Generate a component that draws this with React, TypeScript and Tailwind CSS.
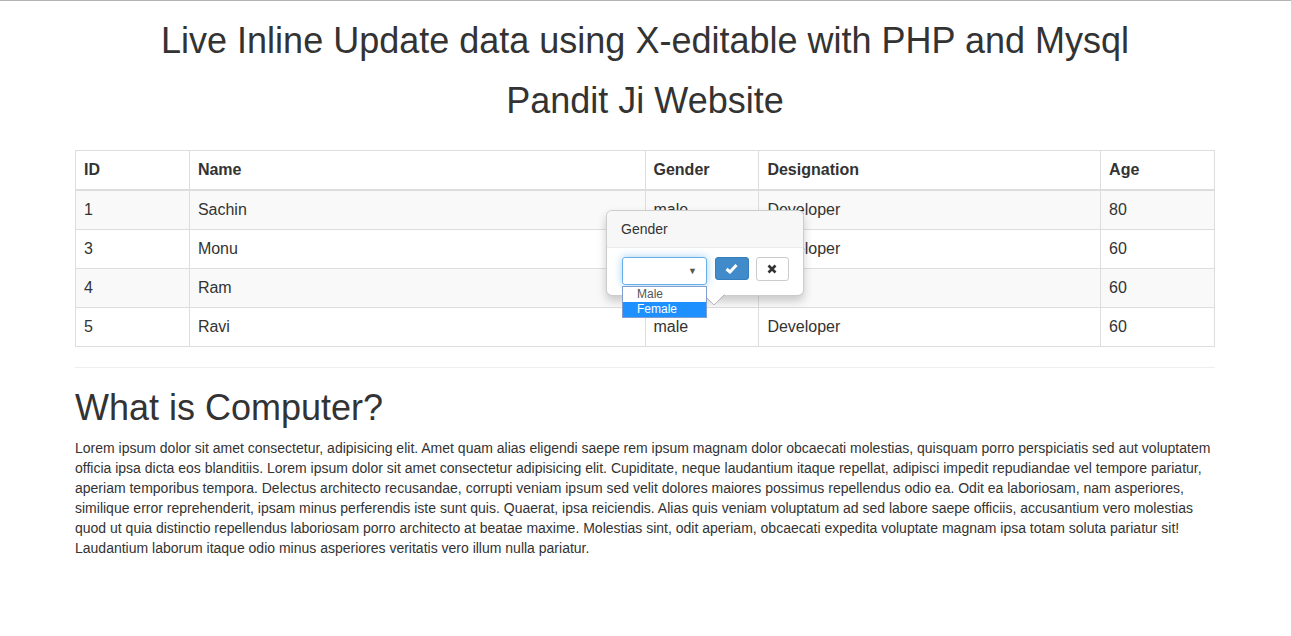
import React from "react";

const rows = [
  { id: "1", name: "Sachin", gender: "male", designation: "Developer", age: "80" },
  { id: "3", name: "Monu", gender: "male", designation: "Developer", age: "60" },
  { id: "4", name: "Ram", gender: "", designation: "", age: "60" },
  { id: "5", name: "Ravi", gender: "male", designation: "Developer", age: "60" },
];

const text =
  "Lorem ipsum dolor sit amet consectetur, adipisicing elit. Amet quam alias eligendi saepe rem ipsum magnam dolor obcaecati molestias, quisquam porro perspiciatis sed aut voluptatem officia ipsa dicta eos blanditiis. Lorem ipsum dolor sit amet consectetur adipisicing elit. Cupiditate, neque laudantium itaque repellat, adipisci impedit repudiandae vel tempore pariatur, aperiam temporibus tempora. Delectus architecto recusandae, corrupti veniam ipsum sed velit dolores maiores possimus repellendus odio ea. Odit ea laboriosam, nam asperiores, similique error reprehenderit, ipsam minus perferendis iste sunt quis. Quaerat, ipsa reiciendis. Alias quis veniam voluptatum ad sed labore saepe officiis, accusantium vero molestias quod ut quia distinctio repellendus laboriosam porro architecto at beatae maxime. Molestias sint, odit aperiam, obcaecati expedita voluptate magnam ipsa totam soluta pariatur sit! Laudantium laborum itaque odio minus asperiores veritatis vero illum nulla pariatur.";

function GenderPopover() {
  return (
    <div className="absolute left-[531px] top-[60px] z-10 w-[198px] rounded-[6px] border border-black/20 bg-white shadow-[0_5px_10px_rgba(0,0,0,0.2)]">
      <div className="rounded-t-[5px] border-b border-[#ebebeb] bg-[#f7f7f7] px-[14px] py-2 text-[14px] leading-[20px]">
        Gender
      </div>
      <div className="flex items-start px-[14px] pb-[10px] pt-[9px]">
        <div className="relative ml-px">
          <div className="flex h-[28px] w-[85px] items-center justify-end rounded-[3px] border border-[#66afe9] pr-[9px] shadow-[0_0_8px_rgba(102,175,233,0.6)]">
            <span className="text-[9px] leading-none text-[#555]">▼</span>
          </div>
          <div className="absolute left-0 top-[29px] z-20 w-[85px] border border-[#7f9dd0] bg-white text-[12px] leading-[15px]">
            <div className="pl-[14px] text-[#555]">Male</div>
            <div className="bg-[#1e90ff] pl-[14px] text-white">Female</div>
          </div>
        </div>
        <button className="ml-2 flex h-[23px] w-[34px] items-center justify-center rounded-[3px] border border-[#357ebd] bg-[#428bca]">
          <svg width="13" height="11" viewBox="0 0 13 11">
            <path d="M1.5 6 L5 9 L11.5 2" fill="none" stroke="#fff" strokeWidth="3" />
          </svg>
        </button>
        <button className="ml-[7px] flex h-[24px] w-[34px] items-center justify-center rounded-[3px] border border-[#ccc] bg-white">
          <svg width="10" height="10" viewBox="0 0 10 10">
            <path d="M1.5 1.5 L8.5 8.5 M8.5 1.5 L1.5 8.5" fill="none" stroke="#333" strokeWidth="2.6" />
          </svg>
        </button>
      </div>
      <svg className="absolute left-[96px] top-full -mt-px" width="22" height="11" viewBox="0 0 22 11">
        <path d="M0 0 L11 11 L22 0" fill="#fff" stroke="rgba(0,0,0,0.25)" />
        <rect x="0" y="-1" width="22" height="1.5" fill="#fff" />
      </svg>
    </div>
  );
}

export default function App() {
  return (
    <div
      className="min-h-screen border-t border-[#b4b4b4] bg-white text-[#333]"
      style={{ fontFamily: '"Liberation Sans", Arial, Helvetica, sans-serif' }}
    >
      <div className="ml-[60px] w-[1170px] px-[15px]">
        <h1 className="mt-5 text-center text-[36px] font-normal leading-[1.1]">
          Live Inline Update data using X-editable with PHP and Mysql
        </h1>
        <h1 className="mb-[10px] mt-5 text-center text-[36px] font-normal leading-[1.1]">
          Pandit Ji Website
        </h1>

        <div className="relative mt-[30px]">
          <table className="w-full table-fixed border-collapse border border-[#ddd] text-[16px] leading-[22px]">
            <colgroup>
              <col className="w-[10%]" />
              <col className="w-[40%]" />
              <col className="w-[10%]" />
              <col className="w-[30%]" />
              <col className="w-[10%]" />
            </colgroup>
            <thead>
              <tr>
                {["ID", "Name", "Gender", "Designation", "Age"].map((h) => (
                  <th key={h} className="border border-b-2 border-[#ddd] p-2 text-left font-bold">
                    {h}
                  </th>
                ))}
              </tr>
            </thead>
            <tbody>
              {rows.map((r, i) => (
                <tr key={r.id} className={i % 2 === 0 ? "bg-[#f9f9f9]" : "bg-white"}>
                  <td className="border border-[#ddd] p-2">{r.id}</td>
                  <td className="border border-[#ddd] p-2">{r.name}</td>
                  <td className="border border-[#ddd] p-2">{r.gender}</td>
                  <td className="border border-[#ddd] p-2">{r.designation}</td>
                  <td className="border border-[#ddd] p-2">{r.age}</td>
                </tr>
              ))}
            </tbody>
          </table>
          <GenderPopover />
        </div>

        <hr className="mb-5 mt-5 border-t border-[#eee]" />

        <h1 className="mb-[10px] mt-5 text-[36px] font-normal leading-[1.1]">What is Computer?</h1>
        <p className="mb-[10px] text-[14px] leading-[20px]">{text}</p>
      </div>
    </div>
  );
}
